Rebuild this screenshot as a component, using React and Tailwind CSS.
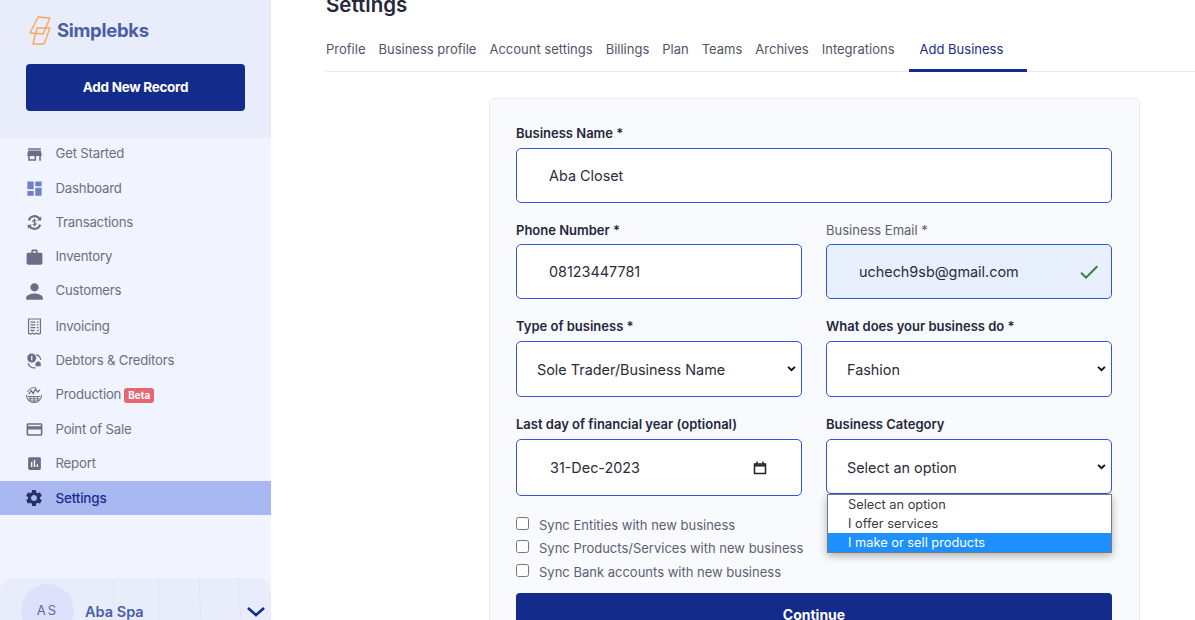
import { MdStore, MdDashboard, MdWork, MdPerson, MdCreditCard, MdAssessment, MdSettings, MdCheck } from 'react-icons/md'

const TransactionIcon = ({ className }) => (
  <svg viewBox="0 0 24 24" className={className} fill="none" stroke="currentColor">
    <path d="M4 9a8.500 8.500 0 0 1 15-2.500M20 15a8.500 8.500 0 0 1-15 2.500" strokeWidth="3" />
    <path d="M21.500 3v6h-6zM2.500 21v-6h6z" fill="currentColor" stroke="none" />
    <path d="M14.500 9.500c-1-1.300-5-1.500-5 .7 0 2.500 5 1.100 5 3.600 0 2.200-4 2-5 .7M12 6.800v10.400" strokeWidth="1.500" />
  </svg>
)

const InvoiceIcon = ({ className }) => (
  <svg viewBox="0 0 24 24" className={className} fill="none" stroke="currentColor">
    <path d="M4.500 2.500h15v18l-2.500 1-2.500-1-2.500 1-2.500-1-2.500 1-2.500-1z" strokeWidth="1.500" />
    <path d="M7 6.500h6M15 6.500h2M7 10h6M15 10h2M7 13.500h6M15 13.500h2M7 17h5M15 17h2" strokeWidth="1.700" />
  </svg>
)

const DebtorIcon = ({ className }) => (
  <svg viewBox="0 0 24 24" className={className} fill="none" stroke="currentColor">
    <circle cx="9" cy="8" r="6" fill="currentColor" stroke="none" />
    <path d="M9 5v6" stroke="#f1f4fe" strokeWidth="1.600" />
    <path d="M4 15a8.500 8.500 0 0 0 10 6M15 3.500a8.500 8.500 0 0 1 6 7" strokeWidth="1.500" />
    <path d="M14 19v-4.500l3.500-2.500 3.500 2.500V19z" fill="currentColor" stroke="none" />
  </svg>
)

const ProductionIcon = ({ className }) => (
  <svg viewBox="0 0 24 24" className={className} fill="none" stroke="currentColor">
    <path d="M2 12a10 10 0 0 0 20 0" strokeWidth="1.500" />
    <path d="M4 14h16M5 17h14M8 20h8M7 14v6M12 14v8M17 14v6" strokeWidth="1.300" />
    <path d="M5 11l3-5 3 4 3-6 3 4 3-3" strokeWidth="1.700" />
    <path d="M3 8a10 10 0 0 1 12-5.500" strokeWidth="1.200" />
  </svg>
)

const navItems = [
  { label: 'Get Started', icon: MdStore, size: 'w-[19px] h-[19px]' },
  { label: 'Dashboard', icon: MdDashboard, size: 'w-[19px] h-[19px]', iconColor: 'text-[#6f81c4]' },
  { label: 'Transactions', icon: TransactionIcon, size: 'w-[17px] h-[17px]' },
  { label: 'Inventory', icon: MdWork, size: 'w-[19px] h-[19px]' },
  { label: 'Customers', icon: MdPerson, size: 'w-[25px] h-[25px] -mx-[3px]' },
  { label: 'Invoicing', icon: InvoiceIcon, size: 'w-[19px] h-[19px]', gap: 'mt-[1px]' },
  { label: 'Debtors & Creditors', icon: DebtorIcon, size: 'w-[18px] h-[18px]' },
  { label: 'Production', icon: ProductionIcon, size: 'w-[18px] h-[18px]', beta: true },
  { label: 'Point of Sale', icon: MdCreditCard, size: 'w-[19px] h-[19px]' },
  { label: 'Report', icon: MdAssessment, size: 'w-[17px] h-[17px]' },
  { label: 'Settings', icon: MdSettings, size: 'w-[20px] h-[20px]', active: true },
]

const tabs = ['Profile', 'Business profile', 'Account settings', 'Billings', 'Plan', 'Teams', 'Archives', 'Integrations']

const boxClass = 'w-full rounded-[5px] border border-[#2f55e4] bg-white text-[14.4px] text-[#2b2b3a] outline-none'

function Field({ label, muted, tight, children }) {
  return (
    <div className="min-w-0">
      <label className={`block ${tight ? 'mb-[5px]' : 'mb-[6px]'} text-[13px] leading-[18px] ${muted ? 'text-[#5c6070]' : 'font-semibold text-[#24283a]'}`}>{label}</label>
      {children}
    </div>
  )
}

function Select({ value, className }) {
  return (
    <div className="relative">
      <select defaultValue={value} className={`${boxClass} ${className} appearance-none pl-[20px] pr-[24px] pt-[2px]`}>
        <option>{value}</option>
      </select>
      <svg viewBox="0 0 10 7" className="absolute right-[6px] top-1/2 -mt-[3px] w-[9px] h-[6px] pointer-events-none" fill="none" stroke="#111" strokeWidth="2.200">
        <path d="M1 1l4 4 4-4" />
      </svg>
    </div>
  )
}

function Sidebar() {
  return (
    <aside className="w-[271px] h-[620px] shrink-0 flex flex-col bg-[#f1f4fe] overflow-hidden">
      <div className="h-[138px] shrink-0 bg-[#e9edfb] pt-[16px] px-[26px]">
        <div className="flex items-center h-[30px] pl-[2px]">
          <svg viewBox="0 0 24 30" className="w-[24px] h-[30px] text-[#f6a75a]" fill="none" stroke="currentColor" strokeWidth="1.400" strokeLinejoin="round">
            <path d="M10 1l12 1-7 16-13-1z" />
            <path d="M9 12l13 0-6 16H5z" />
          </svg>
          <span className="ml-[5px] text-[18.5px] font-bold tracking-[-0.3px] text-[#4a5ea8]">Simplebks</span>
        </div>
        <button className="mt-[18px] w-[219px] h-[47px] rounded-[4px] bg-[#132b8a] text-[13.5px] font-bold tracking-[-0.3px] text-white">Add New Record</button>
      </div>

      <nav className="flex-1 -mt-[1px]">
        {navItems.map((item) => {
          const Icon = item.icon
          return (
            <div key={item.label} className={`flex items-center h-[34.3px] pl-[25px] ${item.gap || ''} ${item.active ? 'bg-[#a9b8f1]' : ''}`}>
              <span className="w-[18px] flex justify-center shrink-0">
                <Icon className={`shrink-0 ${item.size} ${item.active ? 'text-[#2b3168]' : item.iconColor || 'text-[#6a6f88]'}`} />
              </span>
              <span className={`ml-[12.5px] tracking-[-0.2px] ${item.active ? 'text-[13.5px] font-medium text-[#1c2b8c]' : 'text-[13.2px] text-[#6a6f82]'}`}>{item.label}</span>
              {item.beta && <span className="ml-[3px] rounded-[3px] bg-[#e76674] px-[4px] text-[10px] leading-[15px] font-bold text-white">Beta</span>}
            </div>
          )
        })}
      </nav>

      <div className="relative h-[42px] shrink-0 overflow-hidden rounded-t-[14px] bg-[#e9edfb] flex items-start pl-[21px] pt-[6px]">
        <svg viewBox="0 0 271 42" className="absolute inset-0 w-[271px] h-[42px]" fill="none" stroke="#dfe3f4">
          <path d="M114 0v42M159 0v42M199 0l2 42M238 0l3 42" />
        </svg>
        <div className="relative w-[53px] h-[53px] shrink-0 rounded-full bg-[#dde2fa] flex items-center justify-center text-[13px] tracking-[2px] text-[#5a6ab0]">AS</div>
        <span className="relative ml-[11px] mt-[17px] text-[14.5px] font-semibold text-[#4a5ea8]">Aba Spa</span>
        <svg viewBox="0 0 20 12" className="absolute left-[246px] top-[28px] w-[20px] h-[12px]" fill="none" stroke="#132b8a" strokeWidth="2.600">
          <path d="M2 2l8 7 8-7" />
        </svg>
      </div>
    </aside>
  )
}

function SyncOption({ label, className }) {
  return (
    <label className={`flex items-start text-[13px] text-[#5c5f72] ${className}`}>
      <input type="checkbox" className="w-[13px] h-[13px] mt-[1px] accent-[#132b8a]" />
      <span className="ml-[10px] leading-[18px]">{label}</span>
    </label>
  )
}

export default function App() {
  return (
    <div className="flex h-[620px] overflow-hidden bg-white" style={{ fontFamily: 'Inter, "Noto Sans", sans-serif' }}>
      <Sidebar />
      <main className="flex-1 min-w-0 pl-[55px]">
        <h1 className="-mt-[10px] text-[20.5px] leading-[30px] font-semibold text-[#24283a]">Settings</h1>
        <div className="mt-[8px] h-[44px] flex items-start border-b border-[#e6e8ef]">
          <div className="flex gap-[13px] pt-[9px] text-[13px] leading-[24px] text-[#50556a]">
            {tabs.map((t) => <span key={t}>{t}</span>)}
          </div>
          <div className="ml-[14px] w-[118px] h-[44px] pt-[9px] pl-[11px] text-[13px] leading-[24px] text-[#1c2b8c] border-b-[3px] border-[#132b8a]">Add Business</div>
        </div>

        <section className="mt-[26px] ml-[163px] w-[651px] rounded-t-[5px] border border-[#e8ecf4] bg-[#f9fafe] pl-[26px] pr-[27px] pt-[25px]">
          <Field label="Business Name *">
            <input readOnly value="Aba Closet" className={`${boxClass} h-[55px] pl-[32px]`} />
          </Field>

          <div className="mt-[18px] grid grid-cols-2 gap-x-[24px]">
            <Field label="Phone Number *" tight>
              <input readOnly value="08123447781" className={`${boxClass} h-[55px] pl-[32px]`} />
            </Field>
            <Field label="Business Email *" muted tight>
              <div className={`${boxClass} h-[55px] pl-[32px] pr-[10px] flex items-center justify-between !bg-[#e8f0fe]`}>
                <span>uchech9sb@gmail.com</span>
                <MdCheck className="w-[24px] h-[24px] text-[#3a7d44]" />
              </div>
            </Field>

            <div className="mt-[18px]">
              <Field label="Type of business *">
                <Select value="Sole Trader/Business Name" className="h-[56px]" />
              </Field>
            </div>
            <div className="mt-[18px]">
              <Field label="What does your business do *">
                <Select value="Fashion" className="h-[56px]" />
              </Field>
            </div>

            <div className="mt-[18px]">
              <Field label="Last day of financial year (optional)">
                <div className={`${boxClass} h-[57px] pl-[33px] pr-[34px] flex items-center justify-between`}>
                  <span>31-Dec-2023</span>
                  <svg viewBox="0 0 14 14" className="w-[14px] h-[14px] text-[#222]" fill="none" stroke="currentColor">
                    <path d="M1.500 3h11v9.500h-11z" strokeWidth="1.500" />
                    <path d="M1.500 4.500h11" strokeWidth="2" />
                    <path d="M4 .5v2.500M10 .5v2.500" strokeWidth="1.500" />
                  </svg>
                </div>
              </Field>
            </div>
            <div className="relative mt-[18px]">
              <Field label="Business Category">
                <Select value="Select an option" className="h-[55px]" />
              </Field>
              <div className="absolute left-[1px] top-[79px] z-10 w-[285px] border border-[#7a7a7a] bg-white text-[12.8px] leading-[19px] text-[#3a3a44] shadow-[0_3px_8px_rgba(0,0,0,0.3)]">
                <div className="pl-[20px]">Select an option</div>
                <div className="pl-[20px]">I offer services</div>
                <div className="pl-[20px] bg-[#1e90ff] text-white">I make or sell products</div>
              </div>
            </div>
          </div>

          <div className="mt-[20px]">
            <SyncOption label="Sync Entities with new business" />
            <SyncOption label="Sync Products/Services with new business" className="mt-[5px]" />
            <SyncOption label="Sync Bank accounts with new business" className="mt-[6px]" />
          </div>

          <button className="mt-[12px] w-full h-[42px] rounded-t-[4px] bg-[#132b8a] text-[14px] font-bold text-white">Continue</button>
        </section>
      </main>
    </div>
  )
}
